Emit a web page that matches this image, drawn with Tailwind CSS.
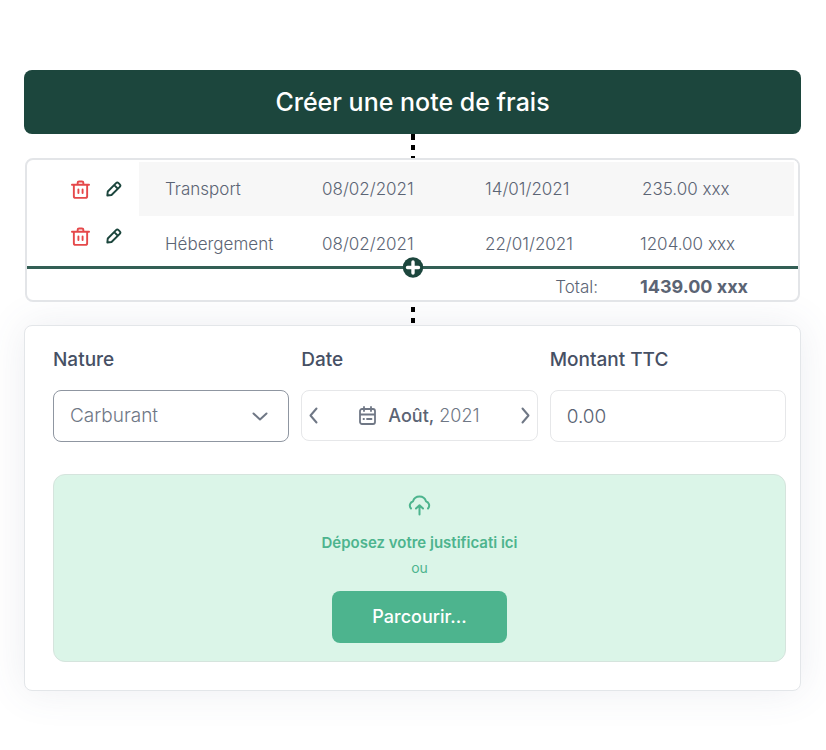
<!DOCTYPE html>
<html lang="fr">
<head>
  <meta charset="UTF-8" />
  <meta name="viewport" content="width=device-width, initial-scale=1.0"/>
  <title>Note de frais</title>
  <script src="https://cdn.jsdelivr.net/npm/@tailwindcss/browser@4"></script>
</head>
<body class="bg-white min-h-screen font-['Inter',sans-serif] text-[#5b6474]">

  <!-- Icons -->
  <svg class="hidden">
    <symbol id="trash" viewBox="0 0 20 20" fill="none" stroke="currentColor" stroke-width="2" stroke-linecap="round" stroke-linejoin="round">
      <path d="M1 5h18M3 5v12a1.800 1.800 0 0 0 1.800 1.800h10.400a1.800 1.800 0 0 0 1.800-1.800V5M7 5V3a1.500 1.500 0 0 1 1.500-1.500h3A1.500 1.500 0 0 1 13 3V5M7.800 10v3.800M12.200 10v3.800"/>
    </symbol>
    <symbol id="pencil" viewBox="0 0 18 18" fill="none" stroke="currentColor" stroke-width="2.200" stroke-linecap="round" stroke-linejoin="round">
      <path d="M1.500 16.300L2 11.800L11.300 2.400a2 2 0 0 1 2.800 0l1.400 1.400a2 2 0 0 1 0 2.800L6.200 15.800zM9.300 4.700l4 4"/>
    </symbol>
  </svg>

  <main class="pl-6 pr-[25px] pt-[70px] pb-14">

    <button type="button" class="block w-full h-16 pt-[2px] rounded-lg bg-[#1c463d] text-white text-[25px] font-medium">Créer une note de frais</button>

    <svg class="block mx-auto" width="4" height="24" fill="#000">
      <path d="M0 0h4v6H0zM0 11h4v5H0zM0 22h4v2H0z"/>
    </svg>

    <!-- Expense lines -->
    <section class="relative z-10 ml-px mr-px bg-white border-2 border-[#e3e5e8] rounded-lg overflow-hidden">
      <table class="w-full table-fixed border-separate border-spacing-0 text-left text-[17px] leading-6 font-light">
        <colgroup>
          <col class="w-[112px]"/>
          <col class="w-[157px]"/>
          <col class="w-[163px]"/>
          <col class="w-[155px]"/>
          <col/>
        </colgroup>
        <tbody>
          <tr class="h-14">
            <td class="pl-[44px] pt-[2px]">
              <div class="flex items-center gap-4">
                <button type="button" aria-label="Supprimer" class="text-[#e5484a]"><svg class="block size-[19px]"><use href="#trash"/></svg></button>
                <button type="button" aria-label="Modifier" class="text-[#1c463d]"><svg class="block size-4"><use href="#pencil"/></svg></button>
              </div>
            </td>
            <td class="pl-[26px] bg-[#f7f7f7] border-t-2 border-white">Transport</td>
            <td class="pl-[26px] bg-[#f7f7f7] border-t-2 border-white">08/02/2021</td>
            <td class="pl-[26px] bg-[#f7f7f7] border-t-2 border-white">14/01/2021</td>
            <td class="pl-7 bg-[#f7f7f7] border-t-2 border-r-4 border-white">235.00 xxx</td>
          </tr>
          <tr class="h-[50px]">
            <td class="pl-[44px] pb-[10px]">
              <div class="flex items-center gap-4">
                <button type="button" aria-label="Supprimer" class="text-[#e5484a]"><svg class="block size-[19px]"><use href="#trash"/></svg></button>
                <button type="button" aria-label="Modifier" class="text-[#1c463d]"><svg class="block size-4"><use href="#pencil"/></svg></button>
              </div>
            </td>
            <td class="pl-[26px] pt-[6px]">Hébergement</td>
            <td class="pl-[26px] pt-[6px]">08/02/2021</td>
            <td class="pl-[26px] pt-[6px]">22/01/2021</td>
            <td class="pl-[26px] pt-[6px]">1204.00 xxx</td>
          </tr>
        </tbody>
        <tfoot>
          <tr class="h-[34px]">
            <td colspan="4" class="border-t-[3px] border-[#335f55] pt-1 pr-4 text-right">Total:</td>
            <td class="border-t-[3px] border-[#335f55] pt-1 pl-[26px] text-lg leading-6 font-bold">1439.00 xxx</td>
          </tr>
        </tfoot>
      </table>
      <button type="button" aria-label="Ajouter une ligne" class="absolute left-1/2 top-[97px] -translate-x-1/2 text-[#1c463d]">
        <svg class="block" width="21" height="21" viewBox="0 0 21 21">
          <circle cx="10.500" cy="10.500" r="10.200" fill="currentColor"/>
          <path d="M10.500 5v11M5 10.500h11" stroke="#fff" stroke-width="3.400" stroke-linecap="round"/>
        </svg>
      </button>
    </section>

    <svg class="relative z-10 block mx-auto" width="4" height="23" fill="#000">
      <path d="M0 5h4v5H0zM0 16h4v5H0z"/>
    </svg>

    <!-- New expense form -->
    <form class="bg-white border border-[#e3e6e9] rounded-lg pt-5 pb-7 pl-7 pr-[14px] shadow-[0_0_40px_rgba(80,95,125,0.11)]">
      <div class="grid grid-cols-3 gap-3">
        <div>
          <label for="nature" class="block mb-4 text-[19px] leading-7 font-medium text-[#465064]">Nature</label>
          <div class="relative">
            <select id="nature" class="appearance-none w-full h-[52px] px-4 rounded-lg border border-[#8f96a1] bg-white text-[19px] font-light text-[#6f7785]">
              <option>Carburant</option>
            </select>
            <svg class="absolute right-[21px] top-[22px] pointer-events-none" width="16" height="9" fill="none" stroke="#6f7785" stroke-width="2" stroke-linecap="round" stroke-linejoin="round">
              <path d="M1.500 1.500L8 7.500l6.500-6"/>
            </svg>
          </div>
        </div>

        <div role="group" aria-labelledby="dateLabel">
          <span id="dateLabel" class="block mb-4 text-[19px] leading-7 font-medium text-[#465064]">Date</span>
          <div class="flex items-center justify-between h-[51px] px-[7px] rounded-lg border border-[#e6e7e9] text-[#6f7785]">
            <button type="button" aria-label="Mois précédent">
              <svg class="block" width="9" height="17" fill="none" stroke="currentColor" stroke-width="2" stroke-linecap="round" stroke-linejoin="round"><path d="M7.500 1.500L1.500 8.500l6 7"/></svg>
            </button>
            <button type="button" class="flex items-center gap-3 text-lg">
              <svg width="17" height="19" fill="none" stroke="currentColor" stroke-width="1.800" stroke-linecap="round" stroke-linejoin="round">
                <path d="M3 3h11a2 2 0 0 1 2 2v11a2 2 0 0 1-2 2H3a2 2 0 0 1-2-2V5a2 2 0 0 1 2-2zM5 1v4M12 1v4M1 8.500h15M4.500 13h.5M8 13h4.500"/>
              </svg>
              <span class="font-light"><span class="font-medium text-[#5b6474]">Août,</span> 2021</span>
            </button>
            <button type="button" aria-label="Mois suivant">
              <svg class="block" width="9" height="17" fill="none" stroke="currentColor" stroke-width="2" stroke-linecap="round" stroke-linejoin="round"><path d="M1.500 1.500L7.500 8.500l-6 7"/></svg>
            </button>
          </div>
        </div>

        <div>
          <label for="montant" class="block mb-4 text-[19px] leading-7 font-medium text-[#465064]">Montant TTC</label>
          <input id="montant" type="text" inputmode="decimal" value="0.00" class="w-full h-[52px] px-4 rounded-lg border border-[#e6e7e9] bg-white text-[19px] font-light text-[#5b6474]"/>
        </div>
      </div>

      <!-- Receipt upload -->
      <div class="mt-8 flex flex-col items-center pt-5 pb-[18px] rounded-xl border border-[#d5e4dd] bg-[#dbf5e8] text-[#4db48e]">
        <svg width="23" height="22" fill="none" stroke="currentColor" stroke-width="2" stroke-linecap="round" stroke-linejoin="round">
          <path d="M3 13.500A4.500 4.500 0 0 1 5 6.200A6.800 6.800 0 0 1 18 6.200A4.500 4.500 0 0 1 20 13.500M11.500 19.500V10.500M8 13.500L11.500 10.200L15 13.500"/>
        </svg>
        <p class="mt-[14px] text-[15px] leading-6 font-semibold">Déposez votre justificati ici</p>
        <p class="mt-px text-sm leading-6">ou</p>
        <button type="button" class="mt-[11px] h-[52px] w-[175px] rounded-lg bg-[#4db48e] text-white text-lg font-medium">Parcourir...</button>
      </div>
    </form>

  </main>

</body>
</html>
